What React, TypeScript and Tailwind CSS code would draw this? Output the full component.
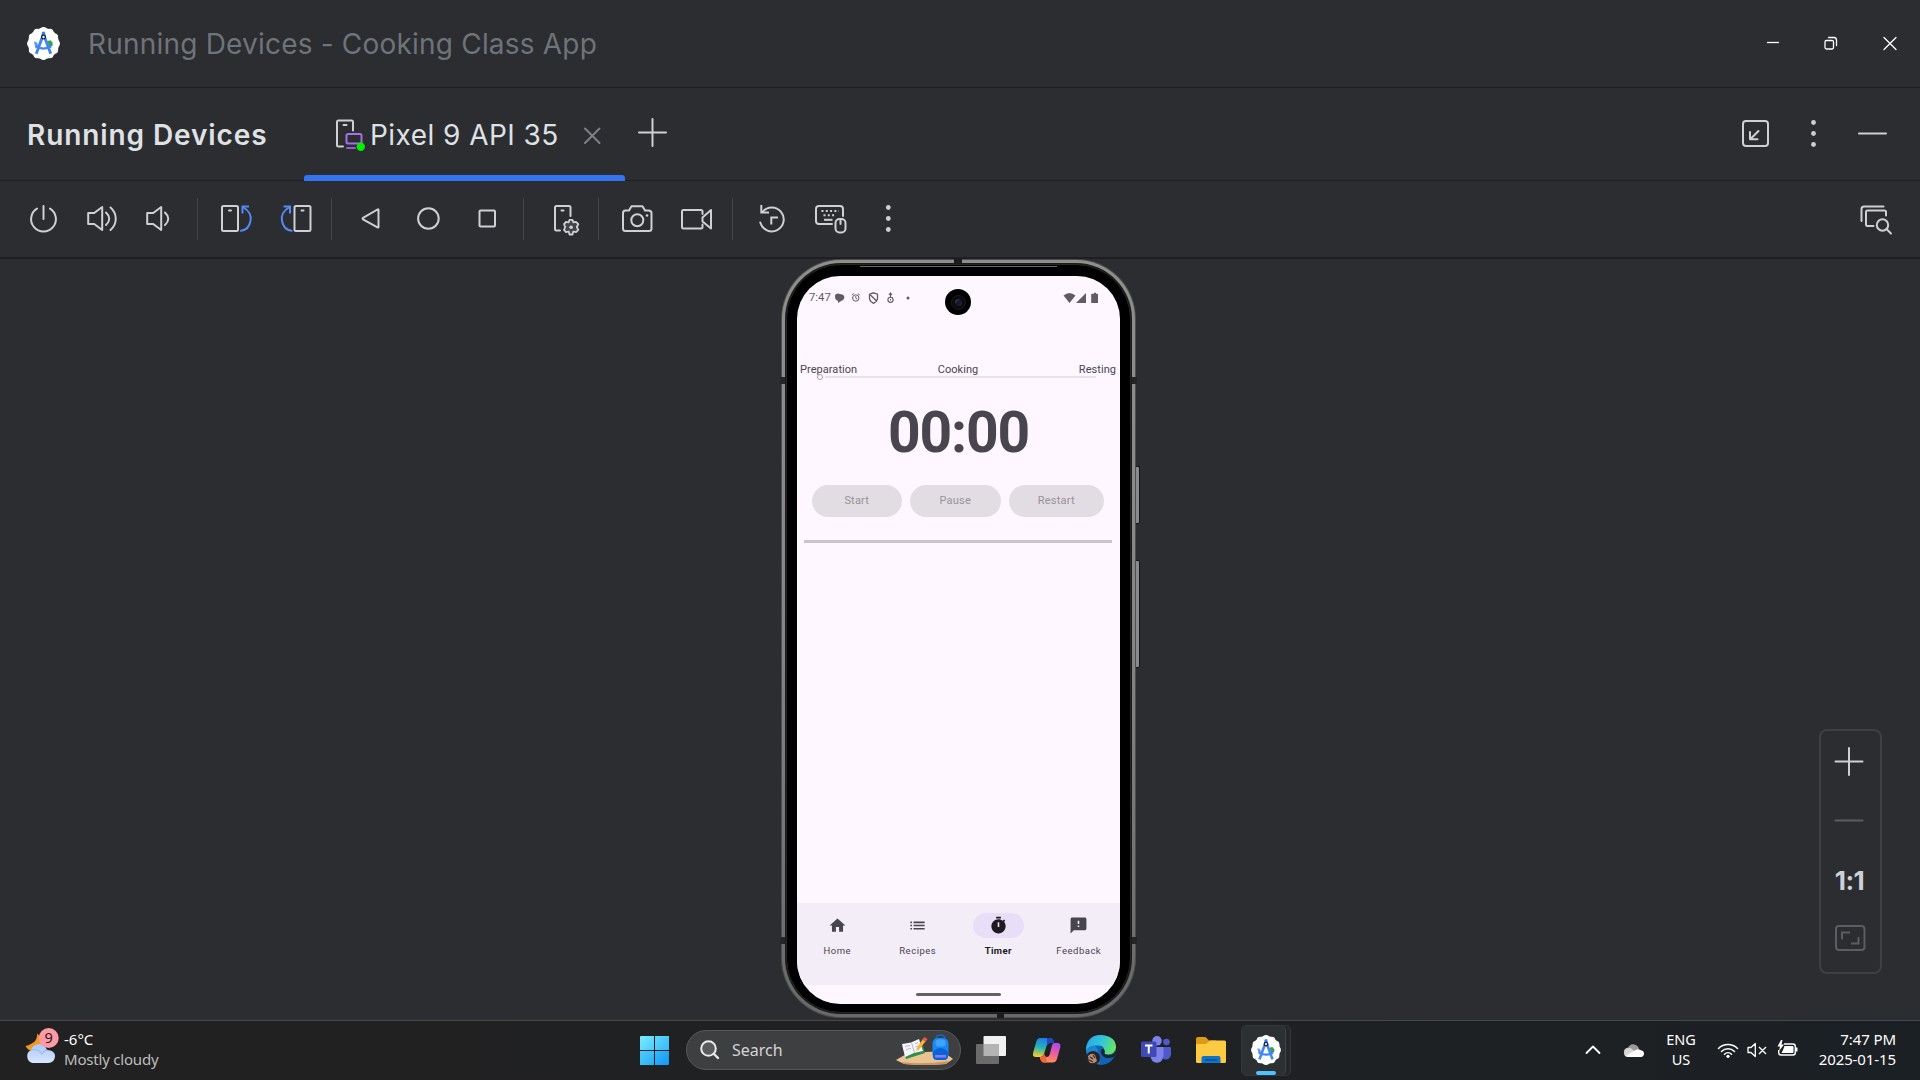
import React from "react";

type IconProps = { children: React.ReactNode; className?: string; size?: number };

/* Stroke icon drawn around its own centre. */
function Icon({ children, className = "", size = 40 }: IconProps) {
  return (
    <svg
      width={size}
      height={size}
      viewBox={`${-size / 2} ${-size / 2} ${size} ${size}`}
      fill="none"
      stroke="currentColor"
      strokeWidth="2"
      strokeLinecap="round"
      strokeLinejoin="round"
      className={`shrink-0 ${className}`}
    >
      {children}
    </svg>
  );
}

const SCALLOP = Array.from({ length: 12 }, (_, i) => {
  const a = (i * Math.PI) / 6;
  return { x: Math.cos(a) * 12.4, y: Math.sin(a) * 12.4 };
});

function StudioLogo({ size }: { size: number }) {
  return (
    <svg width={size} height={size} viewBox="-16 -16 32 32" className="shrink-0">
      <g fill="#fff">
        <circle r="15" />
        {SCALLOP.map((p, i) => (
          <circle key={i} cx={p.x} cy={p.y} r="3.5" />
        ))}
      </g>
      <path d="M4 -2.500L6.800 -3.200L9 -.5L8.600 2.500L5.500 3.500Z" fill="#34a048" />
      <path d="M-9.200 -2L-6.500 -1.200L-5 2.500L-8 4Z" fill="#5b9bff" />
      <g fill="none" stroke="#4285f4">
        <path d="M-.8 -7L-7 10" strokeWidth="2.800" />
        <path d="M.8 -7L7 10" strokeWidth="2.800" />
        <path d="M-7.500 3Q0 6.800 7.500 3" strokeWidth="2.200" />
      </g>
      <path d="M-1.300 -11.500H1.300L2.500 -6H-2.500Z" fill="#3b78e7" />
      <circle cy="-6.300" r="1.800" fill="#fff" stroke="#16243c" strokeWidth="1.300" />
    </svg>
  );
}

function TitleBar() {
  return (
    <header className="flex h-[88px] shrink-0 items-center border-b border-[#1e1f22] pl-[27px]">
      <StudioLogo size={33} />
      <h1 className="ml-[28px] text-[28px] tracking-[0.2px] whitespace-pre text-[#6f737a]">
        Running Devices - Cooking Class App
      </h1>
      <div className="ml-auto flex items-center gap-[19px] pr-[10px] pb-[2px] text-white">
        <Icon>
          <path d="M-5 -.5H7" strokeWidth="1.3" strokeLinecap="butt" />
        </Icon>
        <Icon>
          <g strokeWidth="1.3">
            <rect x="-6" y="-2.500" width="8.500" height="8.500" rx="1.4" />
            <path d="M-2.500 -5.500H3Q5.500 -5.500 5.500 -2.500V2.6" />
          </g>
        </Icon>
        <Icon>
          <path d="M-6 -5.500L6 6.500M6 -5.500L-6 6.500" strokeWidth="1.3" />
        </Icon>
      </div>
    </header>
  );
}

function TabRow() {
  return (
    <div className="flex h-[93px] shrink-0 border-b border-[#1e1f22]">
      <h2 className="flex w-[304px] shrink-0 items-center pt-px pl-[27px] text-[28px] font-semibold tracking-[0.9px] whitespace-nowrap text-[#dfe1e5]">
        Running Devices
      </h2>
      <div className="relative flex w-[321px] shrink-0 items-center pl-[29px]">
        <Icon size={36} className="text-[#ced0d6]">
          <path d="M-8 12.5H-12.5Q-14 12.5 -14 11V-12Q-14 -13.5 -12.5 -13.5H.5Q2 -13.5 2 -12V-3.5" />
          <path d="M-7.500 -9H-4.500" />
          <path d="M-4 14H4" stroke="#955ae0" />
          <rect x="-4.500" y="0" width="15" height="9.500" rx="1.500" stroke="#a571e6" />
          <circle cx="9.800" cy="12.700" r="4.200" fill="#00f000" stroke="none" />
        </Icon>
        <span className="ml-px pt-[2px] text-[28px] tracking-[0.45px] whitespace-nowrap text-[#dfe1e5]">Pixel 9 API 35</span>
        <Icon className="absolute top-[27px] left-[268px] text-[#7d8087]">
          <path d="M-7 -6.500L7.500 8M7.500 -6.500L-7 8" />
        </Icon>
        <div className="absolute bottom-[-1px] left-0 h-[6px] w-full rounded-t-[3px] bg-[#3574f0]" />
      </div>
      <Icon className="mt-[25px] ml-[7px] text-[#ced0d6]">
        <path d="M-13 -.5H14M.5 -14V13" />
      </Icon>
      <div className="ml-auto flex items-center gap-[19px] pr-[27px] text-[#ced0d6]">
        <Icon>
          <rect x="-12" y="-13" width="25" height="25" rx="3" />
          <path d="M3.500 -3L-4.500 5M-5 -2V5.300H2.500" />
        </Icon>
        <Icon>
          <g fill="currentColor" stroke="none">
            <circle cx="-.5" cy="-11.500" r="2.400" />
            <circle cx="-.5" cy="-.5" r="2.400" />
            <circle cx="-.5" cy="10.500" r="2.400" />
          </g>
        </Icon>
        <Icon>
          <path d="M-14 -.5H13" />
        </Icon>
      </div>
    </div>
  );
}

function Speaker({ x }: { x: number }) {
  return <path transform={`translate(${x} -.5)`} d="M-14 -5.500H-8L0 -11.500V11.500L-8 5.500H-14Z" />;
}

function RotateShape() {
  return (
    <>
      <rect x="-14" y="-13" width="16" height="25" rx="1.500" />
      <path d="M-7 -8.500H-5" />
      <g stroke="#548af7">
        <path d="M6.500 -5.500V-12.500H13" strokeLinecap="butt" strokeLinejoin="miter" />
        <path d="M7 -12C13.500 -8 15.500 -2.500 14.500 2C13.500 7.500 10.500 11 5 11.800" />
      </g>
    </>
  );
}

function Group({ children, className }: { children: React.ReactNode; className: string }) {
  return <div className={`flex h-[42px] shrink-0 items-center gap-[18px] border-[#43454a] ${className}`}>{children}</div>;
}

function Toolbar() {
  return (
    <div className="flex h-[78px] shrink-0 items-center border-b-2 border-[#1e1f22] text-[#ced0d6]">
      <Group className="w-[198px] border-r pl-[23px]">
        <Icon>
          <path d="M-6 -10.400A12.400 12.400 0 1 0 7 -10.400M.5 -13V0" />
        </Icon>
        <Icon>
          <Speaker x={1.2} />
          <path d="M5 -6.500Q11.500 -.5 5 6M9.500 -11.500C16.500 -5.500 16.500 5 9.500 11" />
        </Icon>
        <Icon>
          <Speaker x={2.2} />
          <path d="M6 -6.500Q12.500 -.5 6 6" />
        </Icon>
      </Group>
      <Group className="w-[134px] border-r pl-[18px]">
        <Icon>
          <RotateShape />
        </Icon>
        <Icon>
          <g transform="translate(2.500 0) scale(-1 1)">
            <RotateShape />
          </g>
        </Icon>
      </Group>
      <Group className="w-[192px] border-r pl-[18px]">
        <Icon>
          <path d="M8.500 -9V8Q8.500 9 7.500 8.400L-7 .3Q-7.800 -.5 -7 -1.200L7.500 -9.500Q8.500 -10 8.500 -9Z" />
        </Icon>
        <Icon>
          <circle cx=".4" cy="-.5" r="10.300" />
        </Icon>
        <Icon>
          <rect x="-6.500" y="-8.500" width="15.500" height="16" rx="1" />
        </Icon>
      </Group>
      <Group className="w-[75px] border-r pl-[22px]">
        <Icon>
          <path d="M-6 11.500H-9.500Q-11 11.500 -11 10V-11.500Q-11 -13 -9.500 -13H3Q4.500 -13 4.500 -11.500V-3" />
          <path d="M-4.500 -8.500H-2.500" />
          <path
            d="M3.500 .8H6.500L7.300 3.300L10 2.800L12.300 5.200L10.800 8L12.300 10.800L10 13.200L7.300 12.500L6.500 15.500H3.500L2.700 12.500L0 13.200L-2 10.800L-.8 8L-2 5.200L0 2.800L2.700 3.300Z"
            fill="#43454a"
            strokeWidth="1.800"
          />
          <circle cx="5.100" cy="8.200" r="1.800" fill="currentColor" stroke="none" />
        </Icon>
      </Group>
      <Group className="w-[134px] border-r pl-[18px]">
        <Icon>
          <path d="M-14 -6Q-14 -8.500 -11.500 -8.500H-8L-5.500 -12.800H5.500L8 -8.500H11.500Q14.500 -8.500 14.500 -6V9.500Q14.500 12 12 12H-11.500Q-14 12 -14 9.500Z" />
          <circle cx=".3" cy="1.300" r="6" />
          <circle cx="10" cy="-3.500" r="1.300" fill="currentColor" stroke="none" />
        </Icon>
        <Icon>
          <path d="M7.500 -5V-7.500Q7.500 -9 6 -9H-11.500Q-13 -9 -13 -7.500V8Q-13 9.500 -11.500 9.500H6Q7.500 9.500 7.500 8V5.500" />
          <path d="M7.500 -1.500L16 -9V9.500L7.500 2.500Z" />
        </Icon>
      </Group>
      <Group className="pl-[18px]">
        <Icon>
          <path d="M-9.700 -14V-6.500H-2" strokeLinejoin="miter" strokeLinecap="butt" />
          <path d="M-8.500 -7A11.900 11.900 0 1 1 -10.700 3.500" />
          <path d="M.3 5.500V-1.500H7" strokeLinejoin="miter" strokeLinecap="butt" />
        </Icon>
        <Icon>
          <path d="M3 5H-10Q-13 5 -13 2V-10Q-13 -13 -10 -13H11Q14 -13 14 -10V-3" />
          <g strokeLinecap="butt">
            <path d="M-7.500 -8H10" strokeDasharray="2 2.300" />
            <path d="M-5.500 -3.700H7" strokeDasharray="2 2.300" />
            <path d="M-5 .8H3.500" />
          </g>
          <rect x="6.500" y="0" width="10" height="13.500" rx="4" />
          <path d="M11.500 0V5" />
        </Icon>
        <Icon>
          <g fill="currentColor" stroke="none">
            <circle cx="1.300" cy="-11.500" r="2.400" />
            <circle cx="1.300" cy="-.5" r="2.400" />
            <circle cx="1.300" cy="10.500" r="2.400" />
          </g>
        </Icon>
      </Group>
      <div className="ml-auto pr-[24px]">
        <Icon>
          <path d="M-14.500 2V-10Q-14.500 -12.500 -12 -12.500H7.500" />
          <path d="M-2.500 7H-8.500Q-10 7 -10 5.500V-7Q-10 -8.500 -8.500 -8.500H8.500Q10 -8.500 10 -7V-3.500" />
          <circle cx="6.500" cy="6" r="5.700" />
          <path d="M10.500 10L15 14.500" />
        </Icon>
      </div>
    </div>
  );
}

function StatusBar() {
  return (
    <div className="flex h-[42px] items-center pt-[1px] pl-[12px] text-[#5f5d62]">
      <span className="w-[23px] text-[11.300px] leading-none">7:47</span>
      <svg width="80" height="14" viewBox="0 0 80 14" className="ml-px shrink-0" fill="none" stroke="currentColor" strokeWidth="1.100">
        <path d="M2 4Q4 1.500 7 3Q12 3.500 11.300 7Q10.500 9.500 8.500 9.800L5 12V9.800Q1.500 9 2 4Z" fill="currentColor" stroke="none" />
        <circle cx="22.800" cy="7" r="3.200" strokeWidth="1" />
        <path d="M18.800 4L20.800 2.600M26.800 4L24.800 2.600M22.800 5V7.300L24.300 8" strokeWidth=".9" />
        <path d="M40.500 1.800L44.500 3.200V7.500Q44 10.800 40.500 12.300Q37 10.800 36.500 7.500V3.200ZM37.500 4L43.500 10" strokeWidth="1.300" />
        <path d="M57.500 1.500V6M56 4L57.500 2L59 4" />
        <circle cx="57.500" cy="8.800" r="2.600" />
        <circle cx="57.500" cy="8.800" r=".7" fill="currentColor" stroke="none" />
        <circle cx="75" cy="7" r="1.500" fill="currentColor" stroke="none" />
      </svg>
      <svg width="36" height="14" viewBox="0 0 36 14" className="mr-[21.500px] ml-auto shrink-0" fill="currentColor">
        <path d="M.5 4.500Q6.500 -.5 12.500 4.500L6.500 12Z" />
        <path d="M23 2V12H13Z" />
        <path d="M29.800 2.800H31V1.800H33V2.800H34.500Q35 2.800 35 3.300V11.500Q35 12 34.500 12H28.700Q28.200 12 28.200 11.500V3.300Q28.200 2.800 28.700 2.800Z" />
      </svg>
    </div>
  );
}

const NAV = [
  { label: "Home", path: "M10 20v-6h4v6h5v-8h3L12 3 2 12h3v8z" },
  { label: "Recipes", path: "M3 13h2v-2H3v2zm0 4h2v-2H3v2zm0-8h2V7H3v2zm4 4h14v-2H7v2zm0 4h14v-2H7v2zM7 7v2h14V7H7z" },
  {
    label: "Timer",
    path: "M15 1H9v2h6V1zm4.030 6.390 1.420-1.420c-.43-.51-.9-.99-1.410-1.410l-1.420 1.420C16.070 4.740 14.120 4 12 4c-4.970 0-9 4.030-9 9s4.020 9 9 9 9-4.030 9-9c0-2.120-.74-4.070-1.970-5.610zM13 14h-2V8h2v6z",
  },
  { label: "Feedback", path: "M20 2H4c-1.100 0-1.990.9-1.990 2L2 22l4-4h14c1.100 0 2-.9 2-2V4c0-1.100-.9-2-2-2zm-7 12h-2v-2h2v2zm0-4h-2V6h2v4z" },
];

function Screen() {
  return (
    <div className="absolute top-[17px] left-[16px] flex h-[728px] w-[323px] flex-col overflow-hidden rounded-[43px] bg-[#fef7ff] font-[Roboto,sans-serif]">
      <StatusBar />
      <div className="mt-[44px] grid h-[14px] grid-cols-3 items-center pr-[4px] pl-[3px] text-[11px] leading-none tracking-[0.05px] text-[#49454f]">
        <span>Preparation</span>
        <span className="text-center">Cooking</span>
        <span className="text-right">Resting</span>
      </div>
      <div className="relative mt-[-1px] flex h-[4px] items-center pl-[20px]">
        <span className="size-[6px] rounded-full border border-[#a8a3aa]" />
        <span className="ml-[2px] h-[2px] w-[271px] bg-[#e7e1e9]" />
      </div>
      <div className="mt-[25px] text-center text-[57px] leading-[57px] font-bold tracking-[-1.200px] text-[#49454f]">00:00</div>
      <div className="mt-[24px] ml-[14.500px] flex gap-[8px] text-[11px] font-[450] tracking-[0.200px] text-[#97929b]">
        <div className="flex h-[32px] w-[90.500px] items-center justify-center rounded-full bg-[#e2dce3] pt-px">Start</div>
        <div className="flex h-[32px] w-[90.500px] items-center justify-center rounded-full bg-[#e2dce3] pt-px">Pause</div>
        <div className="flex h-[32px] w-[95.500px] items-center justify-center rounded-full bg-[#e2dce3] pt-px">Restart</div>
      </div>
      <div className="mr-[8px] ml-[7px] mt-[23px] h-[3px] bg-[#cac5cd]" />
      <nav className="mt-auto flex h-[82px] shrink-0 bg-[#f3edf7] pt-[10px] pr-[1px]">
        {NAV.map(({ label, path }) => {
          const on = label === "Timer";
          return (
            <div key={label} className="flex flex-1 flex-col items-center">
              <span className={`flex h-[25px] w-[51px] items-center justify-center rounded-full pb-px ${on ? "bg-[#e8def8] text-[#1d1b20]" : "text-[#49454f]"}`}>
                <svg width="19" height="19" viewBox="0 0 24 24" fill="currentColor">
                  <path d={path} />
                </svg>
              </span>
              <span className={`mt-[6.500px] text-[9.500px] leading-[12px] ${on ? "font-bold tracking-[0.400px] text-[#1d1b20]" : "font-[450] tracking-[0.500px] text-[#49454f]"}`}>
                {label}
              </span>
            </div>
          );
        })}
      </nav>
      <div className="flex h-[19px] shrink-0 items-center justify-center pr-px">
        <span className="h-[3px] w-[85px] rounded-full bg-[#656266]" />
      </div>
    </div>
  );
}

function Phone() {
  return (
    <div className="relative h-[759px] w-[355px]">
      <div className="absolute top-[207px] right-[-3.500px] h-[58px] w-[5px] rounded-r-[2px] border border-[#151515] bg-[#8a8a8a]" />
      <div className="absolute top-[301px] right-[-3.500px] h-[108px] w-[5px] rounded-r-[2px] border border-[#151515] bg-[#8a8a8a]" />
      <div className="absolute inset-0 rounded-[60px] bg-[#4e4e4e] p-px">
        <div className="h-full w-full rounded-[59px] bg-linear-to-b from-[#8f8f8f] via-[#858585] to-[#686868] p-[3px]">
          <div className="h-full w-full rounded-[56px] bg-[#1a1a1a] p-px">
            <div className="h-full w-full rounded-[55px] border border-[#262626] bg-black" />
          </div>
        </div>
      </div>
      <div className="absolute top-[7px] left-[79px] h-px w-[197px] bg-[#6b6b6b]" />
      <div className="absolute top-0 left-[173px] h-[5px] w-[8px] bg-[#1c1c1c]" />
      <div className="absolute bottom-0 left-[216px] h-[4px] w-[7px] bg-[#1c1c1c]" />
      <div className="absolute top-[118px] left-[-1px] h-[7px] w-[5px] bg-[#252525]" />
      <div className="absolute top-[118px] right-[-1px] h-[7px] w-[5px] bg-[#252525]" />
      <div className="absolute top-[678px] left-[-1px] h-[7px] w-[5px] bg-[#252525]" />
      <div className="absolute top-[678px] right-[-1px] h-[7px] w-[5px] bg-[#252525]" />
      <Screen />
      <div className="absolute top-[30px] left-[164px] flex size-[26px] items-center justify-center rounded-full bg-black">
        <span className="flex size-[15px] items-center justify-center rounded-full border border-[#1d1d1f] bg-[#0b0b0c]">
          <span className="size-[7px] rounded-full bg-linear-to-br from-[#4c4a63] via-[#15131f] to-[#2b2470]" />
        </span>
      </div>
    </div>
  );
}

function ZoomPanel() {
  return (
    <div className="absolute top-[470px] left-[1819px] flex h-[245px] w-[63px] flex-col items-center rounded-[8px] border-2 border-[#3f4042] pr-px">
      <Icon className="mt-[10px] text-[#ced0d6]">
        <path d="M-14.500 .5H12.500M-1 -13V14" />
      </Icon>
      <Icon className="mt-[19px] text-[#5a5d63]">
        <path d="M-14.500 .5H12.500" />
      </Icon>
      <span className="mt-[20px] mr-[1px] h-[40px] text-[26px] leading-[42px] font-bold tracking-[-0.600px] text-[#ced0d6]">1:1</span>
      <Icon className="mt-[18px] text-[#5a5d63]">
        <rect x="-14" y="-12" width="28.500" height="24" rx="3" />
        <path d="M-8 1.500V-5.500H0M1 5.500H8.500V-1" strokeLinecap="butt" strokeLinejoin="miter" />
      </Icon>
    </div>
  );
}

function Weather() {
  return (
    <div className="flex h-full w-[640px] shrink-0 items-center pl-[24px]">
      <svg width="36" height="40" viewBox="24 1030 36 40" className="shrink-0 overflow-visible">
        <defs>
          <linearGradient id="cloud" x1="0" y1="0" x2="0" y2="1">
            <stop offset="0" stopColor="#a9c8fb" />
            <stop offset="1" stopColor="#d9e6ff" />
          </linearGradient>
        </defs>
        <path d="M37 1033.500Q38 1043 25.500 1046Q29 1053 38 1050L46 1042Z" fill="#f3981e" />
        <path d="M32.500 1063A7 7 0 0 1 31 1050Q33 1044 39 1044Q45 1044 47 1050Q55 1050 55 1056.500Q54.500 1063 48 1063Z" fill="url(#cloud)" />
        <path d="M31 1050Q38 1048 42 1054Q44 1050 48 1050" fill="none" stroke="#86aef0" strokeWidth="1.200" opacity=".7" />
        <circle cx="48.700" cy="1038" r="10" fill="#ff9aa5" />
        <text x="48.700" y="1043.200" textAnchor="middle" fontSize="14.500" fill="#1c1c1c" fontFamily="Noto Sans, sans-serif">
          9
        </text>
      </svg>
      <div className="ml-[4px] pb-[3px] text-[15px] leading-[20px]">
        <div className="text-white">-6°C</div>
        <div className="tracking-[-0.200px] text-[#bdbdbd]">Mostly cloudy</div>
      </div>
    </div>
  );
}

function SearchBox() {
  return (
    <div className="ml-[17px] flex h-[40px] w-[275px] shrink-0 items-center rounded-full border border-[#56585a] bg-[#3e3f40] pl-[12px]">
      <svg width="22" height="22" viewBox="0 0 22 22" fill="none" stroke="#ececec" strokeWidth="2" strokeLinecap="round">
        <circle cx="9.500" cy="9.500" r="7.300" fill="#5a5b5c" />
        <path d="M15 15L19 19" strokeWidth="2.400" />
      </svg>
      <span className="ml-[11px] text-[16px] text-[#d4d4d4]">Search</span>
      <svg width="58" height="32" viewBox="0 0 58 32" className="mr-[6px] ml-auto">
        <path d="M0 26Q14 16 29 18Q48 16 57 25L50 30Q28 32 8 30Z" fill="#e9c391" />
        <path d="M5 28Q28 31 53 27L50 30Q28 32 8 30Z" fill="#c99560" />
        <path d="M6 12L26 8L29 19L10 25Z" fill="#2f8f4a" />
        <path d="M6 10L15 8.500L23 5L27 17L18 19L9 23Z" fill="#f4f4fa" />
        <path d="M15.500 8.500L18.500 19M9 12.500L14 11.500M10 15.500L15 14.500M19 10L22 8.500M19.500 13L23 11.500" stroke="#a6a8b8" strokeWidth=".8" />
        <path d="M21 14L26.500 5.500L29.500 7.500L23 15.500L20 17Z" fill="#ffb02e" />
        <path d="M26.300 5.500L28.500 3L31.500 5L29.700 7.800Z" fill="#f4573b" />
        <path d="M40 5Q40 1 44.500 1Q49 1 49 5" fill="none" stroke="#1565c9" strokeWidth="1.500" />
        <rect x="36.500" y="4" width="16" height="22" rx="5.500" fill="#1e86f0" />
        <rect x="39.500" y="5.500" width="10" height="7" rx="3" fill="#3aa6ff" />
        <path d="M37 18Q44.500 10 52 18V22Q52 26 48 26H41Q37 26 37 22Z" fill="#0b62d6" />
        <path d="M39 21H50V23.500H39Z" fill="#8c7bff" />
      </svg>
    </div>
  );
}

function TaskbarApps() {
  return (
    <>
      <svg width="30" height="28" viewBox="0 0 30 28" className="ml-[15px] shrink-0">
        <rect x="7.500" width="22.500" height="20" rx="1" fill="#f1f1f1" />
        <rect y="8" width="23" height="20" rx="1" fill="#6b6b6b" />
        <rect x="7.500" y="8" width="15.500" height="12" fill="#b4b4b4" />
      </svg>
      <svg width="30" height="28" viewBox="0 0 30 28" className="ml-[26px] shrink-0">
        <defs>
          <linearGradient id="cpl" x1=".5" y1="0" x2=".3" y2="1">
            <stop offset="0" stopColor="#1f7be6" />
            <stop offset=".5" stopColor="#27b3b8" />
            <stop offset="1" stopColor="#f5d02a" />
          </linearGradient>
          <linearGradient id="cpr" x1=".6" y1="0" x2=".3" y2="1">
            <stop offset="0" stopColor="#b04bea" />
            <stop offset=".5" stopColor="#f0609a" />
            <stop offset="1" stopColor="#ff9a4a" />
          </linearGradient>
        </defs>
        <path d="M8 2H18Q20.500 2 21.500 5L22 7H18Q15.500 7 14.700 9.500L12 18Q11 21 8 21H4Q0 21 1.200 16.500L4.500 5Q5.500 2 8 2Z" fill="url(#cpl)" />
        <path d="M15 2H18Q20.500 2 21.300 4.500L22 7H18Q16 7 15 9Z" fill="#1a48c4" />
        <path d="M22 7H25.500Q29.300 7 28.200 11.500L25 23Q24 26.500 20.500 26.500H12Q9.500 26.500 8.500 23.500L8 21Q11 21.500 12.300 20.500L15 21Q17 20.800 17.700 18.500L20 9.500Q20.500 7 22 7Z" fill="url(#cpr)" />
        <path d="M8 21Q11 21 12.300 18L14 21.500 15 26.500H12Q9.500 26.500 8.500 23.500Z" fill="#f5653a" />
      </svg>
      <svg width="32" height="32" viewBox="0 0 32 32" className="ml-[23px] shrink-0">
        <defs>
          <linearGradient id="edg" x1="0" y1=".3" x2="1" y2=".6">
            <stop offset="0" stopColor="#2aa7e8" />
            <stop offset=".5" stopColor="#32c6d8" />
            <stop offset="1" stopColor="#6be85a" />
          </linearGradient>
        </defs>
        <circle cx="16" cy="16" r="15" fill="#1063b5" />
        <path d="M1 14Q3 1 16 1Q31 2 31 13.500Q30 20 23 20.500Q17.500 20.500 19 17Q20 12 14 11.500Q4 11 1 17Z" fill="url(#edg)" />
        <path d="M20 17Q18 21 24 21Q28 21 31 16.500L30.500 22Q26 25 20 23.500Q15 21 16 16Q18 13 20 17Z" fill="#20242a" />
        <path d="M1 17Q3 12 9 11.500Q14 13 13 22L15 30Q4 29 1 17Z" fill="#1b86d4" />
        <circle cx="8" cy="24" r="7" fill="#2a2320" />
        <path d="M3 22Q7 18 10 21L12 27Q8 31 4 28Z" fill="#b58d7c" />
        <path d="M5 23L8 25M8 21L10 24M4 26L8 28" stroke="#3a2b26" strokeWidth="1.200" />
      </svg>
      <svg width="31" height="28" viewBox="0 0 31 28" className="ml-[24px] shrink-0">
        <circle cx="25.500" cy="6" r="3.300" fill="#5059c9" />
        <path d="M20 11H29Q30 11 30 12V18.500Q29 24 24 23.500L20 22Z" fill="#5059c9" />
        <circle cx="16" cy="4.800" r="4.800" fill="#7b83eb" />
        <path d="M9 11H21.500Q22.500 11 22.500 12V19Q22 26.500 16 26.800Q10 26.500 9 19Z" fill="#7b83eb" />
        <rect y="5.500" width="15.500" height="15.500" rx="1.500" fill="#4149b4" />
        <path d="M4 9.500H11.500M7.750 9.500V17.500" stroke="#fff" strokeWidth="2" />
      </svg>
      <svg width="30" height="28" viewBox="0 0 30 28" className="ml-[24px] shrink-0">
        <path d="M0 3Q0 1 2 1H9.500L13 4.500H20V12H0Z" fill="#dd9a12" />
        <path d="M0 8H10L14 4.500H28.500Q30 4.500 30 6V25.500Q30 27 28.500 27H1.500Q0 27 0 25.500Z" fill="#fdcb42" />
        <path d="M5.500 27V22Q5.500 20 7.500 20H22.500Q24.500 20 24.500 22V27Z" fill="#1174c8" />
        <path d="M9.500 24H20.500" stroke="#0b4f93" strokeWidth="1.500" strokeLinecap="round" />
      </svg>
      <div className="ml-[15px] flex h-[51px] w-[50px] shrink-0 rounded-[5px] border border-[#34373a] bg-[#25282b]">
        <div className="relative flex h-[49px] w-[44px] items-center justify-center rounded-[5px] border-r border-[#414447] bg-[#2d3033] pl-[5px]">
          <StudioLogo size={30} />
          <span className="absolute bottom-0 left-[14px] h-[4px] w-[20px] rounded-full bg-[#4cc2ff]" />
        </div>
      </div>
    </>
  );
}

function Tray() {
  return (
    <div className="ml-auto flex h-full items-center pr-[24px] text-white">
      <svg width="16" height="12" viewBox="0 0 16 12" fill="none" stroke="currentColor" strokeWidth="1.800" strokeLinecap="round" strokeLinejoin="round">
        <path d="M1.500 9L8 2.500L14.500 9" />
      </svg>
      <svg width="22" height="16" viewBox="0 0 22 16" className="ml-[22px]">
        <path d="M1 11Q0 6.500 5 5.500Q8 .5 13 3Q16 5 16 7L10 12Z" fill="#9a9a9a" />
        <path d="M1 11Q1 6 6 6Q9 6 10 8L20.500 12Q20 15 17 15H5Q1 15 1 11Z" fill="#d6d6d6" />
        <path d="M3 13.500L13 8Q15 6.500 17.500 8Q21.500 9 21 12Q20.500 15 17.500 15H5.500Q4 15 3 13.500Z" fill="#fff" />
      </svg>
      <div className="ml-[20px] w-[32px] pb-[2px] text-center text-[14.500px] leading-[20px]">
        <div>ENG</div>
        <div>US</div>
      </div>
      <svg width="22" height="18" viewBox="0 0 22 18" className="ml-[20px]" fill="none" stroke="currentColor" strokeWidth="1.500" strokeLinecap="round">
        <path d="M1.500 7.500A13.500 13.500 0 0 1 20.500 7.500M4.500 10.500A9.200 9.200 0 0 1 17.500 10.500M7.500 13.200A5 5 0 0 1 14.500 13.200" />
        <circle cx="11" cy="15.300" r="1.600" fill="currentColor" stroke="none" />
      </svg>
      <svg width="20" height="16" viewBox="0 0 20 16" className="ml-[8px]" fill="none" stroke="currentColor" strokeWidth="1.300" strokeLinejoin="round">
        <path d="M1 5.500H4L8.300 1.500V14.500L4 10.500H1ZM12 5L19 12M19 5L12 12" />
      </svg>
      <svg width="22" height="18" viewBox="0 0 22 18" className="mb-[2px] ml-[10px]" fill="none" stroke="currentColor" strokeWidth="1.400">
        <path d="M7 4H16Q18.300 4 18.300 6.500V12.500Q18.300 15 16 15H4Q1.700 15 1.700 12.500V10" />
        <path d="M7.500 6H15.500Q16.500 6 16.500 7V12Q16.500 13 15.500 13H4.500L6 10Z" fill="currentColor" stroke="none" />
        <path d="M19.500 7.500V11.500" strokeWidth="2" />
        <path d="M4 0L.5 6.500H3L2 11L7 4.500H4.500L5.500 0Z" fill="currentColor" stroke="none" />
      </svg>
      <div className="ml-[17px] w-[80px] pb-[2px] text-right text-[15px] leading-[20px] tracking-[-0.100px] whitespace-nowrap">
        <div>7:47 PM</div>
        <div>2025-01-15</div>
      </div>
    </div>
  );
}

function Taskbar() {
  return (
    <footer className="flex h-[60px] shrink-0 items-center border-t border-[#45474a] bg-linear-to-r from-[#212121] via-[#202123] to-[#1b2024] pb-px font-[Noto_Sans,sans-serif]">
      <Weather />
      <div className="grid shrink-0 grid-cols-2 gap-px">
        <span className="size-[14px] rounded-tl-[1px] bg-linear-to-br from-[#79ecff] to-[#4fcbfb]" />
        <span className="size-[14px] bg-linear-to-br from-[#60d8fd] to-[#36b9f8]" />
        <span className="size-[14px] bg-linear-to-br from-[#4fccfc] to-[#2aaef6]" />
        <span className="size-[14px] rounded-br-[1px] bg-linear-to-br from-[#35b9f9] to-[#0f98f5]" />
      </div>
      <SearchBox />
      <TaskbarApps />
      <Tray />
    </footer>
  );
}

export default function App() {
  return (
    <div className="flex h-[1080px] w-[1920px] flex-col overflow-hidden bg-[#2b2d30] font-[Inter,sans-serif]">
      <TitleBar />
      <TabRow />
      <Toolbar />
      <main className="relative h-[761px] shrink-0 pl-[781px]">
        <Phone />
        <ZoomPanel />
      </main>
      <Taskbar />
    </div>
  );
}
